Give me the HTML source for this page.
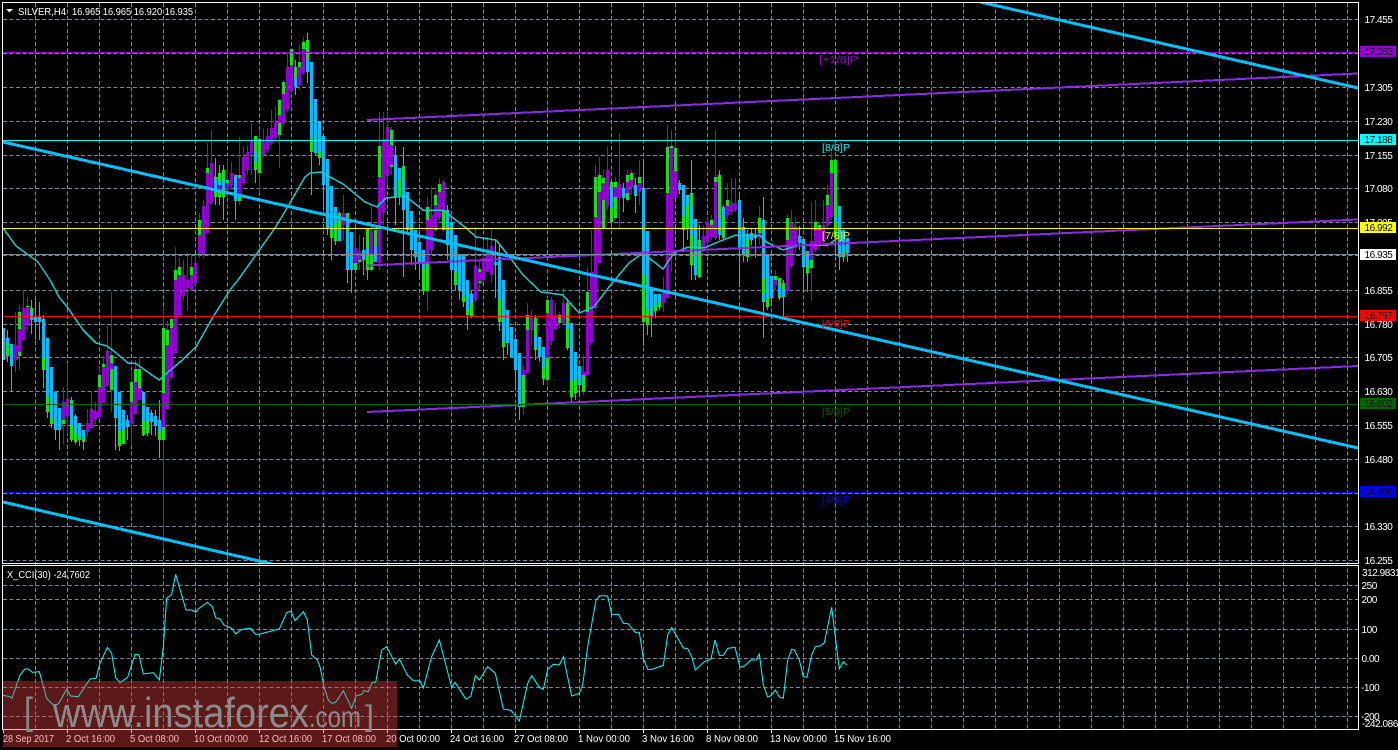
<!DOCTYPE html>
<html><head><meta charset="utf-8"><title>SILVER,H4</title>
<style>
html,body{margin:0;padding:0;background:#000;width:1398px;height:750px;overflow:hidden}
svg{display:block}
text{font-family:"Liberation Sans",sans-serif;font-size:10px;fill:#fff;shape-rendering:auto}
.c{shape-rendering:crispEdges;fill:none}
.a text{letter-spacing:-.45px}
.b{fill:#000}
</style></head><body>
<svg width="1398" height="750" viewBox="0 0 1398 750" xmlns="http://www.w3.org/2000/svg">
<defs>
<clipPath id="m"><rect x="3" y="3" width="1355" height="560"/></clipPath>
<clipPath id="s"><rect x="3" y="567" width="1355" height="162"/></clipPath>
</defs>
<rect width="1398" height="750" fill="#000"/>

<!-- grid -->
<g class="c" stroke="#778899" stroke-width="1" stroke-dasharray="4 2.5">
<path d="M3 19.5H1358M3 53.5H1358M3 87.5H1358M3 121.5H1358M3 155.5H1358M3 188.5H1358M3 222.5H1358M3 255.5H1358M3 290.5H1358M3 324.5H1358M3 357.5H1358M3 391.5H1358M3 425.5H1358M3 459.5H1358M3 493.5H1358M3 526.5H1358M3 560.5H1358"/>
<path d="M3 585.5H1358M3 599.5H1358M3 629.5H1358M3 658.5H1358M3 687.5H1358M3 716.5H1358"/>
<path d="M35.5 3V729M67.5 3V729M99.5 3V729M131.5 3V729M163.5 3V729M195.5 3V729M227.5 3V729M259.5 3V729M291.5 3V729M323.5 3V729M355.5 3V729M387.5 3V729M419.5 3V729M451.5 3V729M483.5 3V729M515.5 3V729M547.5 3V729M579.5 3V729M611.5 3V729M643.5 3V729M675.5 3V729M707.5 3V729M739.5 3V729M771.5 3V729M803.5 3V729M835.5 3V729M867.5 3V729M899.5 3V729M931.5 3V729M963.5 3V729M995.5 3V729M1027.5 3V729M1059.5 3V729M1091.5 3V729M1123.5 3V729M1155.5 3V729M1187.5 3V729M1219.5 3V729M1251.5 3V729M1283.5 3V729M1315.5 3V729M1347.5 3V729"/>
</g>

<g clip-path="url(#m)">
<!-- wicks -->
<path class="c" stroke="#00bfff" stroke-width="1" d="M3.5 328V360M7.5 330V362M11.5 344V391M31.5 300V334M35.5 296V340M39.5 302V340M43.5 315V388M47.5 338V418M51.5 367V428M55.5 392V440M59.5 408V450M71.5 397V442M75.5 414V444M79.5 423V446M83.5 430V450M115.5 366V450M119.5 392V451M123.5 410V444M127.5 415V440M143.5 392V436M147.5 407V436M151.5 410V435M155.5 410V436M159.5 400V458M215.5 158V205M219.5 165V205M223.5 165V220M235.5 175V220M255.5 136V183M295.5 60V95M307.5 33V83M311.5 62V195M315.5 99V155M319.5 121V165M323.5 136V210M327.5 159V235M331.5 186V260M335.5 207V245M339.5 212V241M347.5 213V283M351.5 232V293M363.5 237V275M367.5 240V280M395.5 146V225M399.5 168V205M403.5 147V277M407.5 192V235M411.5 211V265M415.5 230V270M419.5 242V277M423.5 250V295M447.5 205V260M451.5 222V293M455.5 235V290M459.5 254V300M463.5 255V307M467.5 280V330M471.5 290V318M495.5 240V298M499.5 245V331M503.5 280V360M507.5 310V355M511.5 327V357M515.5 339V390M519.5 353V420M535.5 315V360M539.5 337V362M543.5 347V385M567.5 300V350M571.5 323V403M575.5 352V400M579.5 366V393M611.5 180V225M623.5 183V212M635.5 178V213M643.5 159V346M647.5 231V335M651.5 287V337M655.5 294V318M659.5 294V310M679.5 180V194M683.5 185V250M687.5 195V240M691.5 160V280M695.5 219V280M699.5 225V278M719.5 170V240M723.5 205V240M739.5 195V287M743.5 218V262M747.5 230V262M751.5 228V245M755.5 228V258M763.5 197V338M767.5 254V310M771.5 276V305M779.5 278V300M783.5 280V317M799.5 226V250M803.5 239V292M807.5 251V292M835.5 160V255M839.5 206V270M843.5 230V262M847.5 238V262"/>
<path class="c" stroke="#9400d3" stroke-width="1" d="M15.5 312V372M19.5 305V370M23.5 290V340M27.5 297V330M63.5 387V444M67.5 363V434M87.5 409V436M91.5 391V428M95.5 402V424M99.5 368V417M103.5 356V403M107.5 326V386M111.5 292V412M131.5 370V446M135.5 360V414M139.5 358V400M163.5 307V549M167.5 321V409M171.5 319V380M175.5 247V353M179.5 258V315M183.5 260V300M187.5 253V311M191.5 255V290M195.5 255V285M199.5 213V258M203.5 200V258M207.5 143V233M211.5 130V205M227.5 160V195M231.5 162V190M239.5 137V205M243.5 147V185M247.5 145V175M251.5 123V175M259.5 130V193M263.5 128V158M267.5 128V153M271.5 110V145M275.5 107V140M279.5 100V168M283.5 80V125M287.5 53V112M291.5 49V95M299.5 45V90M303.5 37V75M343.5 195V240M355.5 230V270M359.5 235V270M371.5 205V272M379.5 112V270M383.5 112V225M387.5 112V185M391.5 127V175M427.5 197V311M431.5 186V255M435.5 190V232M439.5 178V220M443.5 180V232M475.5 227V302M479.5 260V290M483.5 240V282M487.5 237V272M491.5 230V283M523.5 365V415M527.5 303V373M531.5 310V345M547.5 298V385M551.5 297V345M555.5 302V330M559.5 312V328M563.5 288V325M583.5 355V395M587.5 267V375M591.5 230V345M595.5 165V310M599.5 157V263M603.5 170V228M607.5 146V210M615.5 177V220M619.5 133V228M627.5 170V202M631.5 170V195M639.5 160V205M663.5 277V312M667.5 125V298M671.5 130V272M675.5 135V198M703.5 225V252M707.5 218V255M711.5 215V240M715.5 130V240M727.5 183V220M731.5 178V215M735.5 178V212M759.5 206V245M775.5 270V290M787.5 215V295M791.5 210V268M795.5 218V252M811.5 202V301M815.5 200V252M819.5 222V250M823.5 200V245M827.5 185V228M831.5 152V220"/>
<!-- bodies -->
<path class="c" stroke="#0ee60e" stroke-width="3" d="M7.5 343V356M19.5 312V356M27.5 306V310M31.5 308V320M43.5 358V370M47.5 397V412M51.5 417V424M63.5 402V424M71.5 400V440M75.5 434V442M83.5 432V442M99.5 375V395M103.5 364V375M111.5 355V390M119.5 432V446M123.5 430V444M131.5 382V402M135.5 369V382M139.5 369V400M143.5 422V435M147.5 422V433M159.5 432V440M163.5 328V440M167.5 330V345M171.5 319V345M175.5 270V290M179.5 267V280M191.5 267V285M199.5 220V235M203.5 206V213M207.5 168V173M215.5 177V197M219.5 173V197M223.5 170V197M227.5 180V185M239.5 175V201M255.5 136V170M259.5 139V173M279.5 100V135M283.5 82V113M291.5 49V65M295.5 67V87M299.5 62V67M303.5 42V49M307.5 40V72M311.5 138V152M319.5 152V158M331.5 232V238M335.5 224V241M339.5 213V241M347.5 213V232M355.5 248V270M359.5 252V262M367.5 228V270M371.5 231V270M375.5 230V257M379.5 146V190M391.5 130V167M399.5 180V195M403.5 166V180M423.5 270V291M427.5 207V291M435.5 195V230M439.5 184V210M443.5 210V230M455.5 272V285M463.5 295V302M467.5 309V315M471.5 304V317M479.5 269V283M499.5 300V322M503.5 342V347M523.5 375V407M527.5 315V330M531.5 318V330M535.5 318V350M543.5 367V379M547.5 300V380M559.5 315V323M567.5 303V348M571.5 382V397M575.5 380V393M583.5 375V392M587.5 292V312M595.5 177V250M599.5 175V192M603.5 178V228M611.5 182V222M615.5 182V218M627.5 175V200M631.5 173V187M639.5 177V183M643.5 276V322M647.5 310V325M655.5 306V311M659.5 301V307M667.5 147V193M671.5 146V148M675.5 148V171M683.5 215V230M687.5 195V228M691.5 193V205M691.5 235V265M699.5 240V277M711.5 220V237M715.5 177V182M719.5 175V235M723.5 218V238M727.5 200V215M747.5 240V257M751.5 233V240M759.5 218V235M763.5 277V293M767.5 298V307M775.5 276V280M779.5 278V298M783.5 283V295M787.5 218V240M807.5 265V273M811.5 260V268M815.5 222V250M819.5 225V243M827.5 195V205M831.5 160V173M835.5 160V237M843.5 252V257"/>
<path class="c" stroke="#00bfff" stroke-width="3" d="M3.5 328V360M7.5 338V343M11.5 344V366M31.5 312V320M35.5 317V322M39.5 317V322M43.5 319V358M47.5 338V397M51.5 367V417M55.5 392V430M59.5 408V430M71.5 405V425M75.5 416V434M79.5 423V440M83.5 430V438M115.5 366V418M119.5 392V432M123.5 410V430M127.5 420V427M143.5 392V422M147.5 407V422M151.5 413V422M155.5 416V426M159.5 420V432M215.5 180V190M219.5 181V185M223.5 180V190M235.5 175V201M255.5 152V162M295.5 77V87M307.5 60V72M311.5 62V138M315.5 99V153M319.5 121V152M323.5 136V185M327.5 159V228M331.5 186V232M335.5 207V224M339.5 230V241M347.5 220V270M351.5 232V270M363.5 250V260M367.5 248V256M375.5 245V262M395.5 155V197M399.5 168V180M403.5 180V210M407.5 192V230M411.5 211V250M415.5 230V257M419.5 242V263M423.5 250V270M447.5 210V245M451.5 222V270M455.5 235V272M459.5 254V290M463.5 255V295M467.5 280V309M471.5 294V304M495.5 262V265M499.5 257V300M503.5 280V342M507.5 310V343M511.5 327V357M515.5 339V370M519.5 353V407M535.5 335V348M539.5 337V357M543.5 347V367M567.5 323V330M571.5 323V382M575.5 352V380M579.5 366V385M611.5 187V207M623.5 188V198M635.5 185V196M643.5 188V276M647.5 231V310M651.5 287V317M655.5 294V306M659.5 294V302M679.5 183V190M683.5 185V215M687.5 195V206M691.5 205V235M695.5 219V275M719.5 218V235M723.5 207V218M739.5 200V248M743.5 227V255M747.5 234V240M751.5 236V240M755.5 235V238M763.5 220V277M763.5 293V302M767.5 254V298M771.5 276V298M779.5 285V295M783.5 290V297M799.5 236V243M803.5 239V267M807.5 251V265M835.5 218V222M839.5 206V257M843.5 230V252M847.5 238V253"/>
<path class="c" stroke="#9400d3" stroke-width="3" d="M15.5 345V360M19.5 329V352M23.5 308V340M27.5 307V325M63.5 402V420M67.5 399V416M87.5 423V432M91.5 409V428M95.5 411V419M99.5 387V417M103.5 367V403M107.5 351V386M111.5 363V369M131.5 402V424M135.5 382V414M139.5 388V400M163.5 393V427M167.5 345V409M171.5 328V377M175.5 280V353M179.5 275V315M183.5 275V296M187.5 280V288M191.5 275V290M195.5 263V283M199.5 235V255M203.5 206V255M207.5 173V233M211.5 163V203M219.5 185V190M227.5 183V190M231.5 173V185M239.5 178V195M243.5 157V183M247.5 152V170M251.5 140V153M263.5 142V155M267.5 136V150M271.5 128V143M275.5 122V138M279.5 115V123M283.5 94V123M287.5 67V110M291.5 65V91M299.5 67V85M303.5 49V73M343.5 213V225M355.5 248V263M359.5 252V260M371.5 231V255M379.5 177V263M383.5 139V213M387.5 127V176M391.5 145V165M427.5 220V262M431.5 215V250M435.5 205V228M439.5 192V217M443.5 182V210M475.5 266V300M479.5 272V282M483.5 258V280M487.5 249V272M491.5 246V275M523.5 370V375M527.5 330V373M531.5 318V330M547.5 313V358M551.5 300V341M555.5 315V329M563.5 303V323M583.5 372V375M587.5 312V375M591.5 272V343M595.5 217V308M599.5 192V263M603.5 183V200M607.5 170V207M615.5 187V197M619.5 184V197M627.5 182V193M631.5 180V187M639.5 183V192M663.5 293V303M667.5 193V298M671.5 148V255M675.5 171V198M703.5 236V250M707.5 222V242M711.5 225V237M715.5 182V238M727.5 206V215M731.5 203V212M735.5 203V210M759.5 233V238M775.5 280V285M787.5 240V291M791.5 223V266M795.5 227V248M811.5 241V260M815.5 230V250M819.5 230V243M823.5 225V242M827.5 205V225M831.5 173V217"/>

<!-- MA -->
<polyline class="c" stroke="#19c9c9" stroke-width="1.5" points="3,228 16,246 38,262 50,280 59,297 68,308 83,330 96,343 107,346 115,352 128,363 135,363 159,380 180,362 196,347 213,317 230,290 238,280 275,228 287,208 305,177 310,173 322,172 328,176 343,184 365,202 377,207 386,198 405,196 423,210 443,210 466,228 476,237 496,240 508,255 523,275 541,292 563,295 579,313 594,307 609,287 629,263 643,253 663,269 674,253 688,247 704,248 718,242 736,235 759,235 768,243 783,250 799,245 828,245 839,237"/>

<!-- purple channels -->
<g class="c" stroke="#8a2be2" stroke-width="2">
<path d="M367 120L1358 73.5"/>
<path d="M367 265.5L1358 219.5"/>
<path d="M367 412L1358 366"/>
</g>

<!-- horizontals -->
<g class="c" stroke-width="1">
<path stroke="#9400d3" d="M3 52.5H1358"/>
<path stroke="#00ffff" d="M3 140.5H1358"/>
<path stroke="#ffff00" d="M3 228.5H1358"/>
<path stroke="#778899" d="M3 254.5H1358"/>
<path stroke="#ff0000" d="M3 316.5H1358"/>
<path stroke="#006400" d="M3 404.5H1358"/>
<path stroke="#0000ff" d="M3 492.5H1358"/>
</g>

<!-- thick trendlines -->
<g class="c" stroke="#00bfff" stroke-width="3">
<path d="M3 142L1358 448"/>
<path d="M980 2L1358 88"/>
<path d="M3 502L272 564"/>
</g>
</g>

<!-- pivot labels -->
<text x="819" y="63" style="fill:#9400d3" textLength="39" lengthAdjust="spacingAndGlyphs">[+1/8]P</text>
<text x="822" y="151" style="fill:#00ffff" textLength="28" lengthAdjust="spacingAndGlyphs">[8/8]P</text>
<text x="822" y="239" style="fill:#ffff00" textLength="28" lengthAdjust="spacingAndGlyphs">[7/8]P</text>
<text x="822" y="327" style="fill:#ff0000" textLength="28" lengthAdjust="spacingAndGlyphs">[6/8]P</text>
<text x="822" y="415" style="fill:#006400" textLength="28" lengthAdjust="spacingAndGlyphs">[5/8]P</text>
<text x="822" y="503" style="fill:#0000ff" textLength="28" lengthAdjust="spacingAndGlyphs">[4/8]P</text>

<!-- frame -->
<g class="c" stroke="#fff" stroke-width="1">
<path d="M2.5 2.5H1358.5V563.5H2.5Z"/>
<path d="M2.5 565.5H1358.5V729.5H2.5Z"/>
<path d="M3.5 730V733M67.5 730V733M131.5 730V733M195.5 730V733M259.5 730V733M323.5 730V733M387.5 730V733M451.5 730V733M515.5 730V733M579.5 730V733M643.5 730V733M707.5 730V733M771.5 730V733M835.5 730V733"/>
</g>

<!-- CCI -->
<g clip-path="url(#s)">
<polyline transform="translate(0 560) scale(.33333)" fill="none" stroke="#00ffff" stroke-width="3" points="9,406 30,410 36,415 60,345 75,327 85,327 97,337 118,335 140,415 160,435 175,432 200,388 212,408 235,410 270,357 288,355 300,310 322,262 335,280 347,353 360,368 383,352 405,283 417,285 430,342 460,338 478,360 490,260 500,115 515,103 527,43 558,150 575,150 587,157 597,145 622,127 637,140 647,173 660,177 672,195 695,205 707,222 725,208 750,205 767,223 780,222 838,207 860,158 873,153 885,182 910,155 922,180 935,285 952,300 960,320 972,380 985,420 995,430 1007,427 1030,392 1055,445 1068,408 1085,403 1092,392 1105,395 1117,367 1127,367 1145,270 1160,260 1187,313 1198,297 1222,345 1240,362 1260,363 1270,384 1295,290 1318,240 1355,382 1365,367 1398,418"/>
<polyline transform="translate(466 560) scale(.33333)" fill="none" stroke="#00ffff" stroke-width="3" points="0,418 15,408 28,347 40,360 65,320 88,340 112,447 135,451 160,483 185,370 197,347 220,382 232,388 245,328 262,313 280,315 292,290 317,408 340,400 350,375 365,260 390,120 402,107 425,108 437,163 458,163 472,190 485,190 508,217 520,217 532,295 545,328 557,328 592,316 605,225 617,202 652,264 665,266 677,290 688,330 715,305 735,297 747,240 760,286 772,286 785,265 807,262 822,322 835,318 855,300 870,300 880,282 892,375 905,411 915,407 928,390 940,411 952,415 965,300 977,268 985,270 1000,300 1012,350 1023,352 1037,285 1048,260 1062,258 1075,248 1097,142 1120,327 1132,305 1142,315"/>
</g>

<!-- header -->
<path d="M6 9H13L9.5 12.5Z" fill="#fff"/>
<text x="18" y="15" textLength="48" lengthAdjust="spacingAndGlyphs">SILVER,H4</text>
<text x="72" y="15" textLength="121" lengthAdjust="spacingAndGlyphs">16.965 16.965 16.920 16.935</text>
<text x="7" y="578" textLength="83" lengthAdjust="spacingAndGlyphs">X_CCI(30) -24,7602</text>

<!-- price axis -->
<g class="a">
<text x="1364.5" y="23">17.455</text>
<text x="1364.5" y="91">17.305</text>
<text x="1364.5" y="125">17.230</text>
<text x="1364.5" y="159">17.155</text>
<text x="1364.5" y="192">17.080</text>
<text x="1364.5" y="226">17.005</text>
<text x="1364.5" y="294">16.855</text>
<text x="1364.5" y="328">16.780</text>
<text x="1364.5" y="361">16.705</text>
<text x="1364.5" y="395">16.630</text>
<text x="1364.5" y="429">16.555</text>
<text x="1364.5" y="463">16.480</text>
<text x="1364.5" y="530">16.330</text>
<text x="1364.5" y="564">16.255</text>
<rect x="1360" y="46" width="36" height="11" fill="#9400d3"/><text class="b" x="1364.5" y="55" style="fill:#000">17.383</text>
<rect x="1360" y="134" width="36" height="11" fill="#00ffff"/><text x="1364.5" y="143" style="fill:#000">17.188</text>
<rect x="1360" y="222" width="36" height="11" fill="#ffff00"/><text x="1364.5" y="231" style="fill:#000">16.992</text>
<rect x="1360" y="249" width="36" height="11" fill="#fff"/><text x="1364.5" y="258" style="fill:#000">16.935</text>
<rect x="1360" y="310" width="36" height="11" fill="#ff0000"/><text x="1364.5" y="319" style="fill:#000">16.797</text>
<rect x="1360" y="398" width="36" height="11" fill="#006400"/><text x="1364.5" y="407" style="fill:#000">16.602</text>
<rect x="1360" y="486" width="36" height="11" fill="#0000ff"/><text x="1364.5" y="495" style="fill:#000">16.406</text>
<text x="1362" y="576">312.9831</text>
<text x="1361.5" y="589">250</text>
<text x="1361.5" y="603">200</text>
<text x="1361.5" y="633">100</text>
<text x="1361.5" y="662">0.00</text>
<text x="1361" y="691">-100</text>
<text x="1361" y="720">-200</text>
<text x="1362" y="727">-242.0861</text>
</g>

<!-- time axis -->
<g>
<text x="3" y="742" textLength="51" lengthAdjust="spacingAndGlyphs">28 Sep 2017</text>
<text x="66" y="742" textLength="49" lengthAdjust="spacingAndGlyphs">2 Oct 16:00</text>
<text x="130" y="742" textLength="49" lengthAdjust="spacingAndGlyphs">5 Oct 08:00</text>
<text x="194" y="742" textLength="54" lengthAdjust="spacingAndGlyphs">10 Oct 00:00</text>
<text x="259" y="742" textLength="53" lengthAdjust="spacingAndGlyphs">12 Oct 16:00</text>
<text x="322" y="742" textLength="54" lengthAdjust="spacingAndGlyphs">17 Oct 08:00</text>
<text x="386" y="742" textLength="54" lengthAdjust="spacingAndGlyphs">20 Oct 00:00</text>
<text x="450" y="742" textLength="54" lengthAdjust="spacingAndGlyphs">24 Oct 16:00</text>
<text x="514" y="742" textLength="54" lengthAdjust="spacingAndGlyphs">27 Oct 08:00</text>
<text x="578" y="742" textLength="52" lengthAdjust="spacingAndGlyphs">1 Nov 00:00</text>
<text x="642" y="742" textLength="52" lengthAdjust="spacingAndGlyphs">3 Nov 16:00</text>
<text x="706" y="742" textLength="52" lengthAdjust="spacingAndGlyphs">8 Nov 08:00</text>
<text x="770" y="742" textLength="57" lengthAdjust="spacingAndGlyphs">13 Nov 00:00</text>
<text x="834" y="742" textLength="57" lengthAdjust="spacingAndGlyphs">15 Nov 16:00</text>
</g>

<!-- watermark -->
<rect x="3" y="681" width="394" height="66" fill="rgb(240,65,65)" fill-opacity=".38"/>
<g>
<text x="24" y="724" style="fill:#8a8686;font-size:38px" textLength="9" lengthAdjust="spacingAndGlyphs">[</text>
<text x="53" y="727" style="fill:#8e8a8a;font-size:42px" textLength="256" lengthAdjust="spacingAndGlyphs">www.instaforex</text>
<text x="309" y="727" style="fill:#8e8a8a;font-size:30px" textLength="52" lengthAdjust="spacingAndGlyphs">.com</text>
<text x="365" y="726" style="fill:#8a8686;font-size:30px" textLength="9" lengthAdjust="spacingAndGlyphs">]</text>
</g>
</svg>
</body></html>
